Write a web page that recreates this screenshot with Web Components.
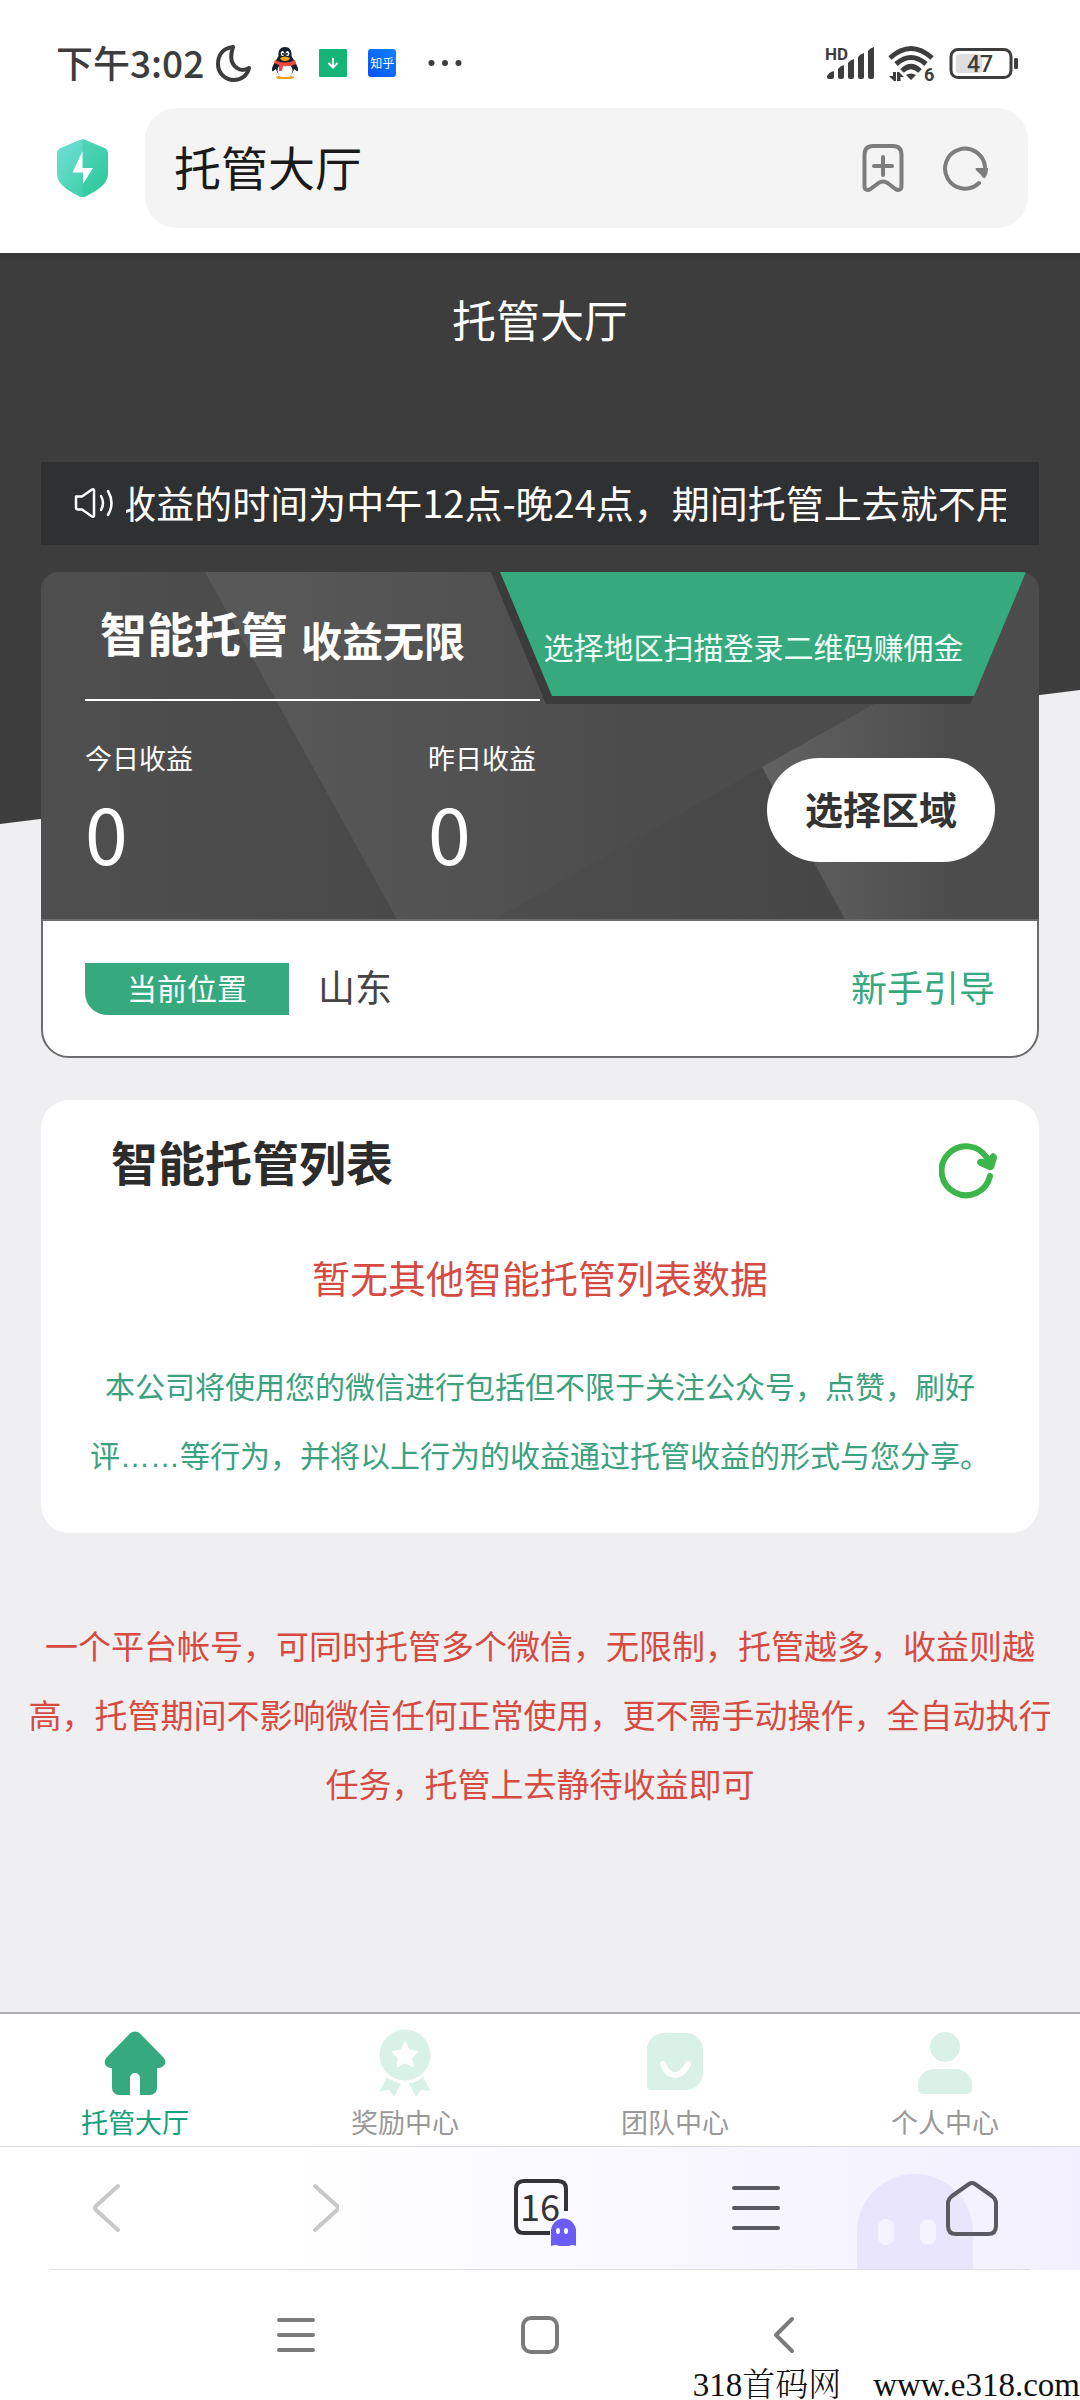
<!DOCTYPE html>
<html lang="zh-CN">
<head>
<meta charset="utf-8">
<meta name="viewport" content="width=device-width, initial-scale=1">
<title>托管大厅</title>
<style>
  html, body { margin: 0; }
  body {
    font-family: "Noto Sans CJK SC", "Noto Sans", sans-serif;
    background: #efeff1;
    color: #2f3032;
  }
</style>
</head>
<body>
<hosting-app>
  <status-bar slot="top" time="下午3:02" battery="47"></status-bar>
  <address-bar slot="top" value="托管大厅"></address-bar>

  <page-title>托管大厅</page-title>
  <notice-bar>收益的时间为中午12点-晚24点，期间托管上去就不用</notice-bar>
  <promo-card>
    <span slot="title">智能托管</span>
    <span slot="subtitle">收益无限</span>
    <span slot="ribbon">选择地区扫描登录二维码赚佣金</span>
    <stat-item label="今日收益">0</stat-item>
    <stat-item label="昨日收益">0</stat-item>
    <span slot="action">选择区域</span>
  </promo-card>
  <location-row label="当前位置" guide="新手引导">山东</location-row>
  <list-card heading="智能托管列表">
    <span slot="empty">暂无其他智能托管列表数据</span>
    本公司将使用您的微信进行包括但不限于关注公众号，点赞，刷好评……等行为，并将以上行为的收益通过托管收益的形式与您分享。
  </list-card>
  <foot-note>一个平台帐号，可同时托管多个微信，无限制，托管越多，收益则越高，托管期间不影响微信任何正常使用，更不需手动操作，全自动执行任务，托管上去静待收益即可</foot-note>

  <tab-bar slot="bottom">
    <tab-item active label="托管大厅">
      <svg width="62" height="66" viewBox="0 0 62 66" fill="#36a97f" aria-hidden="true"><path d="M26 3.500a7 7 0 0 1 10 0L59 27c5 5 1.500 11-5.500 11H53v20a7 7 0 0 1-7 7H36V48a5 5 0 0 0-10 0v17H15a7 7 0 0 1-7-7V38C1 38-1.500 32 3 27Z"/></svg>
    </tab-item>
    <tab-item label="奖励中心">
      <svg width="54" height="70" viewBox="0 0 54 70" fill="#d9f1e7" aria-hidden="true"><circle cx="27" cy="27" r="25.500"/><path d="M9 49q6 5 14 6.500L16 69l-5-7-9.500 1Z"/><path d="M45 49q-6 5-14 6.500L38 69l5-7 9.500 1Z"/><path fill="#fff" stroke="#fff" stroke-width="2" stroke-linejoin="round" d="m27 15 3.800 7.600 8.400 1.200-6.100 5.900 1.500 8.400-7.600-4-7.600 4 1.500-8.400-6.100-5.900 8.400-1.200Z"/></svg>
    </tab-item>
    <tab-item label="团队中心">
      <svg width="56" height="62" viewBox="0 0 56 62" fill="#d9f1e7" aria-hidden="true"><path d="M17 1h22a17 17 0 0 1 17 17v23a17 17 0 0 1-17 17H4a4 4 0 0 1-4-4V18A17 17 0 0 1 17 1Z"/><path d="M16 32q4 11 12 11t13-11" fill="none" stroke="#fff" stroke-width="6" stroke-linecap="round"/></svg>
    </tab-item>
    <tab-item label="个人中心">
      <svg width="54" height="64" viewBox="0 0 54 64" fill="#d9f1e7" aria-hidden="true"><circle cx="27" cy="16" r="15"/><path d="M16 38h22a16 16 0 0 1 16 16v4a5 5 0 0 1-5 5H5a5 5 0 0 1-5-5v-4a16 16 0 0 1 16-16Z"/></svg>
    </tab-item>
  </tab-bar>
  <browser-toolbar slot="bottom" tabs="16"></browser-toolbar>
  <system-nav slot="bottom"><span>318首码网</span><span>www.e318.com</span></system-nav>
</hosting-app>

<script>
const BASE = `
  :host, *, *::before, *::after { box-sizing: border-box; }
  :host { display: block; }
  :host([hidden]) { display: none; }
  button, input { font: inherit; color: inherit; border: 0; padding: 0; margin: 0; background: none; outline: none; }
  a { color: inherit; text-decoration: none; }
  svg { display: block; flex: none; }
`;

function component(name, render) {
  customElements.define(name, class extends HTMLElement {
    constructor() {
      super();
      this.attachShadow({ mode: 'open' });
    }
    connectedCallback() {
      if (this.shadowRoot.childNodes.length) return;
      const tpl = document.createElement('template');
      tpl.innerHTML = render(this);
      this.shadowRoot.append(tpl.content.cloneNode(true));
    }
  });
}
const attr = (el, key) => el.getAttribute(key) || '';

component('hosting-app', () => `
  <style>${BASE}
    :host { display: flex; flex-direction: column; min-height: 100vh; }
    header, footer { background: #fff; }
    main { position: relative; z-index: 0; flex: 1; padding-bottom: 60px; }
    main::before {
      content: ""; position: absolute; z-index: -1; inset: 0 0 auto; height: 571px;
      background: linear-gradient(#363636, #3d3d3d 12px);
      clip-path: polygon(0 0, 100% 0, 100% 437px, 0 100%);
    }
  </style>
  <header><slot name="top"></slot></header>
  <main><slot></slot></main>
  <footer><slot name="bottom"></slot></footer>
`);

component('status-bar', el => `
  <style>${BASE}
    :host { display: flex; justify-content: space-between; padding: 36px 61px 18px 56px; color: #3d3d3d; }
    div { display: flex; align-items: center; height: 54px; }
    .left { gap: 21px; }
    .clock { gap: 11px; font-size: 37px; line-height: 50px; font-weight: 500; }
    .clock span { padding-bottom: 3px; }
    .right { gap: 13px; }
    .zhihu { width: 28px; height: 28px; border-radius: 3px; background: linear-gradient(45deg, #0a50f5, #0a84ff); color: #fff; font-size: 12px; line-height: 28px; justify-content: center; }
    .dots { margin-left: 11px; }
    text { font-family: Roboto, sans-serif; }
  </style>
  <div class="left">
    <div class="clock"><span>${attr(el, 'time')}</span>
      <svg width="36" height="38" viewBox="0 0 36 38" fill="none" stroke="#3d3d3d" stroke-width="4" stroke-linejoin="round"><path d="M18 3C8 4 3 11 3 20c0 9 7 16 16 16 7 0 13-4 15-12-3 2-8 3-12 0-6-4-7-12-4-21Z"/></svg>
    </div>
    <svg width="26" height="32" viewBox="0 0 26 32"><path fill="#15202c" d="M13 0C8 0 6 4 6.500 9L3 15c-2 3-4 7-2.500 9.500L4 22c1 4 4 8 9 8s8-4 9-8l3.500 2.500C27 22 25 18 23 15l-3.500-6C20 4 18 0 13 0Z"/><ellipse cx="13" cy="23.500" rx="7.500" ry="7" fill="#fff"/><path fill="#f5a31a" d="M4 30q3-2 5 0h8q2-2 5 0 0 2-4.500 2h-9Q4 32 4 30ZM8 11q5-3 10 0-1 3-5 3t-5-3Z"/><path fill="#f0483e" d="M3 13q10 5 20 0l1 4q-6 3-13 2l-1 5H7v-6l-5-2Z"/><ellipse cx="10.500" cy="6.500" rx="1.800" ry="2.600" fill="#fff"/><ellipse cx="15.500" cy="6.500" rx="1.800" ry="2.600" fill="#fff"/><circle cx="11" cy="7" r=".9"/><circle cx="15" cy="7" r=".9"/></svg>
    <svg width="28" height="28" viewBox="0 0 28 28"><rect width="28" height="28" rx="1" fill="#15b578"/><path d="M14 9v9m-4.500-4 4.500 4.500 4.500-4.500" fill="none" stroke="#fff" stroke-width="2"/></svg>
    <div class="zhihu"><span>知乎</span></div>
    <svg class="dots" width="34" height="8" viewBox="0 0 34 8" fill="#3d3d3d"><circle cx="3.500" cy="4" r="3"/><circle cx="17" cy="4" r="3"/><circle cx="30.500" cy="4" r="3"/></svg>
  </div>
  <div class="right">
    <svg width="50" height="36" viewBox="0 0 50 36" fill="#3d3d3d"><text x="0" y="15" font-size="17" font-weight="700">HD</text><path d="M2 31q2-4 7-5v6q0 2-2 2H4q-2 0-2-2ZM13 24q2-3 6-4v12q0 2-2 2h-2q-2 0-2-2ZM23 18q2-3 6-4v18q0 2-2 2h-2q-2 0-2-2ZM33 12q2-3 6-4v24q0 2-2 2h-2q-2 0-2-2ZM43 6q2-3 6-4v30q0 2-2 2h-2q-2 0-2-2Z"/></svg>
    <svg width="48" height="46" viewBox="0 -4 48 46" fill="none" stroke="#3d3d3d" stroke-width="5"><path d="M2 14Q23-5 44 14M8 20Q23 7 38 20M14 27Q23 18 32 27"/><path fill="#3d3d3d" stroke="none" d="M18 31q5-3 10 0l-5 5ZM5 28h3v9H6l-5-5h4ZM9 28h2l5 5h-3.500v4H9Z"/><text x="36" y="37" font-size="18" font-weight="700" fill="#3d3d3d" stroke="none">6</text></svg>
    <svg width="70" height="32" viewBox="0 0 70 32"><rect x="2" y="2.500" width="60" height="28" rx="7" fill="#fff" stroke="#3d3d3d" stroke-width="3"/><rect x="7" y="7" width="26" height="19" rx="3" fill="#dedede"/><text x="31" y="25" font-size="23" font-weight="500" text-anchor="middle" fill="#3d3d3d">${attr(el, 'battery')}</text><rect x="65" y="11" width="4" height="11" rx="1.500" fill="#3d3d3d"/></svg>
  </div>
`);

component('address-bar', el => `
  <style>${BASE}
    :host { padding: 0 52px 25px 57px; }
    form { display: flex; align-items: center; gap: 37px; margin: 0; }
    label { flex: 1; min-width: 0; display: flex; align-items: center; height: 120px; padding: 0 38px 0 29px; border-radius: 32px; background: #f4f4f4; }
    input { flex: 1; min-width: 0; height: 76px; padding-bottom: 6px; font-size: 47px; color: #1a1a1a; }
    .mark { margin-right: 38px; }
  </style>
  <form>
    <svg width="51" height="58" viewBox="0 0 51 58"><defs><linearGradient id="g" x1="0" y1="0" x2="1" y2="1"><stop offset="0" stop-color="#74e0d8"/><stop offset="1" stop-color="#2fcb9b"/></linearGradient></defs><path fill="url(#g)" d="M22.500 1a7 7 0 0 1 6 0l20 8.500Q51 11 51 14v20c0 9-6 15-22 23.300a7 7 0 0 1-7 0C6 49 0 43 0 34V14q0-3 2.500-4.500Z"/><path fill="#1fbf90" opacity=".25" d="M25.500 0l3 1 20 8.500Q51 11 51 14v20c0 9-6 15-22 23.300l-3.500.7Z"/><path fill="#fff" d="M25.500 12v17H36L26 45V33.500H15.500Z"/></svg>
    <label>
      <input type="text" aria-label="网址" value="${attr(el, 'value')}">
      <button type="button" class="mark" aria-label="添加书签"><svg width="42" height="50" viewBox="0 0 42 50" fill="none" stroke="#7d7d7d" stroke-width="4" stroke-linejoin="round" stroke-linecap="round"><path d="M2.500 12Q2.500 3 11 3h20q8.500 0 8.500 9v31c0 4-3 5-6 3l-8-6q-4.500-3-9 0l-8 6c-3 2-6 1-6-3ZM21 14v18M12 23h18"/></svg></button>
      <button type="button" aria-label="刷新"><svg width="48" height="48" viewBox="0 0 48 48" fill="none" stroke="#7d7d7d" stroke-width="4" stroke-linecap="round"><path d="M37 39a20 20 0 1 1 6-16"/><path fill="#7d7d7d" stroke="none" d="M34 24h12q0 6-3 10-2 1-4-3l-5-5q-1-1 0-2Z"/></svg></button>
    </label>
  </form>
`);

component('page-title', () => `
  <style>${BASE}
    :host { padding-top: 36px; }
    h1 { margin: 0; font-size: 44px; line-height: 60px; font-weight: 400; color: #fff; text-align: center; }
  </style>
  <h1><slot></slot></h1>
`);

component('notice-bar', () => `
  <style>${BASE}
    :host { display: flex; align-items: center; gap: 12px; height: 83px; margin: 113px 41px 0; padding: 0 33px; background: #2f3032; color: #fff; }
    p { flex: 1; min-width: 0; display: flex; justify-content: center; overflow: hidden; margin: 0; padding-bottom: 4px; font-size: 38px; line-height: 56px; white-space: nowrap; }
    svg { margin-bottom: 2px; }
  </style>
  <svg width="40" height="32" viewBox="0 0 40 32" fill="none" stroke="#fff" stroke-width="2.500" stroke-linecap="round" stroke-linejoin="round"><path d="M2 9.500h6L18 2.500q2-1 2 1v25q0 2-2 1L8 22.500H4q-2 0-2-2ZM27 9q4 7 0 14M34 4q7 12 0 24"/></svg>
  <p><span><slot></slot></span></p>
`);

component('promo-card', () => `
  <style>${BASE}
    :host { position: relative; z-index: 0; overflow: hidden; margin: 27px 41px 0; padding: 0 44px; border-radius: 18px 18px 0 0; background: #4c4c4c; color: #fff; }
    .facets { position: absolute; z-index: -1; inset: 0; width: 100%; height: 100%; }
    .head { display: flex; align-items: flex-end; gap: 13px; width: 50%; height: 129px; padding: 0 0 39px 15px; border-bottom: 2px solid #fff; white-space: nowrap; font-weight: 700; }
    h2 { margin: 0; font-size: 47px; line-height: 56px; }
    .sub { font-size: 41px; line-height: 42px; }
    .ribbon { position: absolute; top: 0; right: 13px; width: 535px; height: 132px; padding: 52px 10px 0 0; text-align: center; font-size: 30px; line-height: 44px; color: #f0fff8; }
    .ribbon svg { position: absolute; z-index: -1; inset: 0; }
    .body { display: flex; align-items: center; height: 218px; }
    .stats { flex: 1; min-width: 0; display: flex; align-items: flex-start; padding-bottom: 8px; }
    ::slotted(stat-item) { flex: 0 0 343px; }
    button { width: 228px; height: 104px; flex: none; border-radius: 52px; background: #fff; color: #333; font-size: 38px; line-height: 56px; font-weight: 700; padding-bottom: 4px; }
  </style>
  <svg class="facets" viewBox="0 0 998 347" preserveAspectRatio="none">
    <defs>
      <linearGradient id="a" x1=".1" x2=".75" y1="0" y2="0"><stop offset="0" stop-color="#585858"/><stop offset="1" stop-color="#4c4c4c"/></linearGradient>
      <linearGradient id="b" x1="0" x2="1"><stop offset="0" stop-color="#4d4d4d"/><stop offset="1" stop-color="#464646"/></linearGradient>
      <linearGradient id="c" x1="0" x2="1"><stop offset="0" stop-color="#626262"/><stop offset=".85" stop-color="#4c4c4c"/></linearGradient>
      <linearGradient id="d" x1="0" x2="1"><stop offset="0" stop-color="#4f4f4f"/><stop offset="1" stop-color="#494949"/></linearGradient>
    </defs>
    <path fill="url(#d)" d="M0 0h164l192 347H0Z"/>
    <path fill="url(#a)" d="M164 0h450l130 200-290 147h-98Z"/>
    <path fill="url(#b)" d="M454 347 721 195l83 152Z"/>
    <path fill="url(#c)" d="m721 195 107-60 120-60v272H804Z"/>
  </svg>
  <div class="head"><h2><slot name="title"></slot></h2><span class="sub"><slot name="subtitle"></slot></span></div>
  <div class="ribbon">
    <svg width="535" height="132" viewBox="0 0 535 132"><path fill="#3b3b3b" d="M0 0h20l463 124-4 8H55Z"/><path fill="#36a97f" d="M9 0h526l-52 124H61Z"/></svg>
    <slot name="ribbon"></slot>
  </div>
  <div class="body"><div class="stats"><slot></slot></div><button type="button"><slot name="action"></slot></button></div>
`);

component('stat-item', el => `
  <style>${BASE}
    dl { margin: 0; }
    dt { font-size: 27px; line-height: 36px; }
    dd { margin: 16px 0 0; font-size: 77px; line-height: 80px; }
  </style>
  <dl><dt>${attr(el, 'label')}</dt><dd><slot></slot></dd></dl>
`);

component('location-row', el => `
  <style>${BASE}
    :host { display: flex; align-items: center; height: 139px; margin: 0 41px; padding: 0 42px; border: 2px solid #6c6c6c; border-radius: 0 0 28px 28px; background: #fff; }
    .tag { width: 204px; height: 52px; border-radius: 0 0 0 22px; background: #36a97f; color: #fff; font-size: 30px; line-height: 48px; text-align: center; }
    .place { margin-left: 29px; font-size: 37px; line-height: 56px; color: #444; }
    a { margin-left: auto; font-size: 36px; line-height: 56px; color: #36a97f; }
    .place, a { padding-bottom: 6px; }
  </style>
  <span class="tag">${attr(el, 'label')}</span><span class="place"><slot></slot></span><a href="#guide">${attr(el, 'guide')}</a>
`);

component('list-card', el => `
  <style>${BASE}
    :host { margin: 42px 41px 0; padding: 31px 42px 42px; border-radius: 28px; background: #fff; }
    header { display: flex; align-items: flex-start; justify-content: space-between; padding-left: 28px; }
    h2 { margin: 0; font-size: 47px; line-height: 60px; font-weight: 700; color: #2c2c2c; }
    button { margin-top: 12px; }
    .empty { margin: 48px 0 0; font-size: 38px; line-height: 60px; text-align: center; color: #d54b42; }
    .note { margin: 46px 0 0; font-family: "Liberation Sans", "Noto Sans CJK SC", sans-serif; font-size: 30px; line-height: 69px; text-align: center; color: #3ba17e; }
  </style>
  <header>
    <h2>${attr(el, 'heading')}</h2>
    <button type="button" aria-label="刷新列表"><svg width="58" height="56" viewBox="0 0 58 56" fill="none" stroke="#3cb54a" stroke-width="6" stroke-linecap="round"><path d="M51 33a24.500 24.500 0 1 1-3-18"/><path fill="#3cb54a" stroke="none" d="M56 11q2 1 2 4l-3 10q-2 3-5 2l-9-4q-5-3-2-6 2-2 5-1l4 1 4-6q2-2 4 0Z"/></svg></button>
  </header>
  <p class="empty"><slot name="empty"></slot></p>
  <p class="note"><slot></slot></p>
`);

component('foot-note', () => `
  <style>${BASE}
    p { margin: 78px 20px 0; font-size: 33px; line-height: 69px; text-align: center; color: #d54b42; }
  </style>
  <p><slot></slot></p>
`);

component('tab-bar', () => `
  <style>${BASE}
    nav { display: grid; grid-template-columns: repeat(4, 1fr); border-top: 2px solid #aeaeae; background: #fff; }
  </style>
  <nav><slot></slot></nav>
`);

component('tab-item', el => `
  <style>${BASE}
    a { display: flex; flex-direction: column; align-items: center; gap: 6px; padding: 14px 0 6px; color: #999; font-size: 27px; line-height: 36px; }
    :host([active]) a { color: #16a07c; }
    .icon { display: flex; align-items: center; justify-content: center; height: 70px; }
  </style>
  <a href="#tab"><span class="icon"><slot></slot></span>${attr(el, 'label')}</a>
`);

component('browser-toolbar', el => `
  <style>${BASE}
    :host { position: relative; z-index: 0; border-top: 1px solid #dcdce0; background: linear-gradient(90deg, #fff 25%, #f2f0fe); }
    :host::after { content: ""; position: absolute; inset: auto 50px 0; height: 1px; background: #dfdfe4; }
    nav { display: grid; grid-template-columns: repeat(5, 1fr); height: 123px; padding-bottom: 2px; }
    button { display: flex; align-items: center; justify-content: center; }
    .ghost { position: absolute; z-index: -1; right: 107px; bottom: 0; }
    text { font-family: "Noto Sans CJK SC", sans-serif; }
  </style>
  <svg class="ghost" width="116" height="96" viewBox="0 0 116 96"><path fill="#e8e5fc" d="M0 96V58a58 58 0 0 1 116 0v38Z"/><rect x="21" y="45" width="16" height="26" rx="8" fill="#f5f4fe"/><rect x="63" y="45" width="16" height="26" rx="8" fill="#f5f4fe"/></svg>
  <nav>
    <button type="button" aria-label="后退"><svg width="30" height="52" viewBox="0 0 30 52" fill="none" stroke="#c8c8c8" stroke-width="4" stroke-linecap="round" stroke-linejoin="round"><path d="M25 4 3 24q-2 2 0 4l22 20"/></svg></button>
    <button type="button" aria-label="前进"><svg width="30" height="52" viewBox="0 0 30 52" fill="none" stroke="#c8c8c8" stroke-width="4" stroke-linecap="round" stroke-linejoin="round"><path d="m6 4 22 20q2 2 0 4L6 48"/></svg></button>
    <button type="button" aria-label="标签页"><svg width="72" height="76" viewBox="0 0 72 76" fill="none"><path d="M46 64H20q-8 0-8-8V20q0-8 8-8h34q8 0 8 8v22" transform="translate(0 -1)" stroke="#333338" stroke-width="4"/><text x="36" y="51" font-size="36" text-anchor="middle" fill="#333338">${attr(el, 'tabs')}</text><path fill="#6c5cf7" d="M47 61a12.500 12.500 0 0 1 25 0v15q-4-2-7 0-5 2-10 0-3-2-8 0Z"/><ellipse cx="54" cy="61" rx="2" ry="3" fill="#fff"/><ellipse cx="62" cy="61" rx="2" ry="3" fill="#fff"/></svg></button>
    <button type="button" aria-label="菜单"><svg width="48" height="46" viewBox="0 0 48 46" stroke="#5a5a62" stroke-width="4" stroke-linecap="round"><path d="M2 3h44M2 23h44M2 43h44"/></svg></button>
    <button type="button" aria-label="主页"><svg width="52" height="56" viewBox="0 0 52 56" fill="none" stroke="#5a5a62" stroke-width="4" stroke-linejoin="round"><path d="M23 4q3-2 6 0l17 12q4 3 4 7v23q0 8-8 8H10q-8 0-8-8V23q0-4 4-7Z"/></svg></button>
  </nav>
`);

component('system-nav', () => `
  <style>${BASE}
    nav { display: flex; justify-content: center; gap: 198px; padding-top: 42px; }
    button { display: flex; align-items: center; justify-content: center; width: 46px; height: 46px; }
    svg { fill: none; stroke: #7b7b7b; stroke-width: 4; stroke-linecap: round; stroke-linejoin: round; }
    .mark { display: flex; justify-content: flex-end; gap: 32px; margin-top: 12px; height: 30px; line-height: 30px; font-family: "Liberation Serif", "Noto Serif CJK SC", "Noto Sans CJK SC", serif; font-size: 33px; font-weight: 300; color: #111; white-space: nowrap; }
  </style>
  <nav>
    <button type="button" aria-label="最近任务"><svg width="38" height="36" viewBox="0 0 38 36"><path d="M2 3h34M2 18h34M2 33h34"/></svg></button>
    <button type="button" aria-label="桌面"><svg width="38" height="38" viewBox="0 0 38 38"><rect x="2" y="2" width="34" height="34" rx="8"/></svg></button>
    <button type="button" aria-label="返回"><svg width="22" height="38" viewBox="0 0 22 38"><path d="M19 3 3 19l16 16"/></svg></button>
  </nav>
  <div class="mark"><slot></slot></div>
`);
</script>
</body>
</html>
